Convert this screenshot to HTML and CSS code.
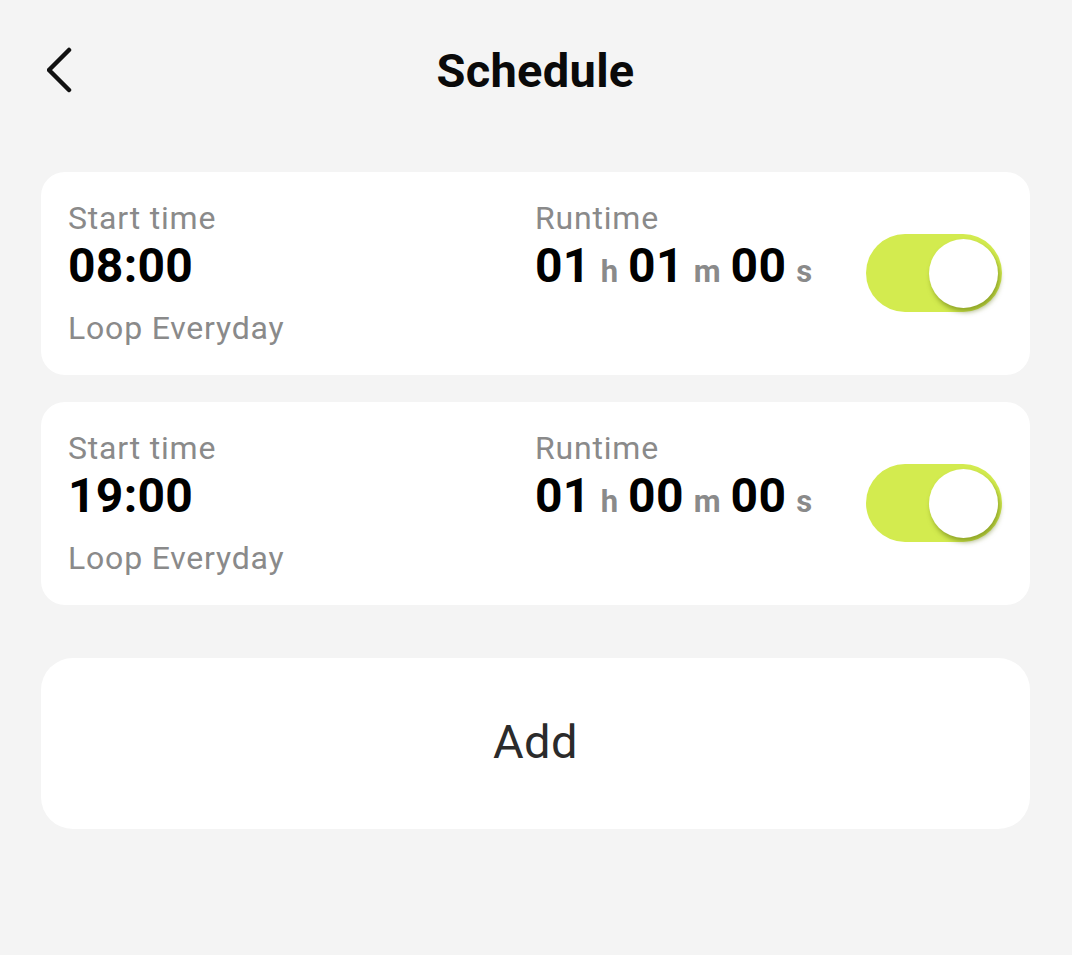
FILE: index.html
```html
<!DOCTYPE html>
<html lang="en">
<head>
  <meta charset="UTF-8">
  <meta name="viewport" content="width=device-width, initial-scale=1.0">
  <title>Schedule</title>
  <link rel="stylesheet" href="styles.css">
</head>
<body>
  <div class="page">
    <!-- Header -->
    <div class="header">
      <button class="back-btn" aria-label="Back">
        <svg width="30" height="50" viewBox="0 0 30 50">
          <path d="M22 5 L2 25 L22 45" fill="none" stroke="#111" stroke-width="4.5" stroke-linecap="round" stroke-linejoin="round"/>
        </svg>
      </button>
      <h1>Schedule</h1>
    </div>

    <!-- Schedule List -->
    <div class="schedule-list">
      <div class="schedule-card">
        <div class="col start-col">
          <div class="label">Start time</div>
          <div class="time">08:00</div>
          <div class="loop">Loop Everyday</div>
        </div>
        <div class="col runtime-col">
          <div class="label">Runtime</div>
          <div class="time">01<span class="unit">h</span>01<span class="unit">m</span>00<span class="unit">s</span></div>
        </div>
        <div class="toggle on"><span class="knob"></span></div>
      </div>

      <div class="schedule-card">
        <div class="col start-col">
          <div class="label">Start time</div>
          <div class="time">19:00</div>
          <div class="loop">Loop Everyday</div>
        </div>
        <div class="col runtime-col">
          <div class="label">Runtime</div>
          <div class="time">01<span class="unit">h</span>00<span class="unit">m</span>00<span class="unit">s</span></div>
        </div>
        <div class="toggle on"><span class="knob"></span></div>
      </div>
    </div>

    <!-- Add Button -->
    <button class="add-btn">Add</button>
  </div>
</body>
</html>
```

FILE: styles.css
```css
/* Reset and Base Styles */
* {
  margin: 0;
  padding: 0;
  box-sizing: border-box;
}

body {
  background-color: #f4f4f4;
  font-family: Roboto, "Liberation Sans", Arial, sans-serif;
  color: #000;
  height: 100vh;
  overflow: hidden;
}

.page {
  padding: 0 42px 0 41px;
}

/* Header */
.header {
  height: 140px;
  display: flex;
  align-items: center;
  justify-content: center;
  position: relative;
}

.header h1 {
  font-size: 47px;
  font-weight: bold;
  color: #0a0a0a;
  letter-spacing: 0.3px;
}

.back-btn {
  position: absolute;
  left: 6px;
  top: 45px;
  background: transparent;
  border: none;
  cursor: pointer;
  display: flex;
}

/* Schedule Cards */
.schedule-list {
  margin-top: 32px;
  display: flex;
  flex-direction: column;
  gap: 27px;
}

.schedule-card {
  background: #ffffff;
  border-radius: 24px;
  padding: 28px 28px 29px 27px;
  display: flex;
  align-items: center;
}

.col {
  align-self: flex-start;
}

.start-col {
  width: 467px;
}

.label {
  font-size: 32px;
  line-height: 36px;
  letter-spacing: 0.8px;
  color: #8a8a8a;
}

.time {
  font-size: 48px;
  line-height: 56px;
  font-weight: bold;
  letter-spacing: 0.3px;
  margin-top: 2px;
}

.time .unit {
  font-size: 31px;
  color: #8a8a8a;
  letter-spacing: 0;
  margin: 0 10px 0 10px;
}

.loop {
  font-size: 32px;
  line-height: 36px;
  letter-spacing: 0.8px;
  color: #8a8a8a;
  margin-top: 16px;
}

/* Toggle */
.toggle {
  margin-left: auto;
  width: 136px;
  height: 78px;
  border-radius: 39px;
  background: #d3eb4f;
  position: relative;
  cursor: pointer;
}

.toggle .knob {
  position: absolute;
  top: 5px;
  right: 4px;
  width: 69px;
  height: 69px;
  border-radius: 50%;
  background: #ffffff;
  box-shadow: 2px 4px 5px rgba(90, 110, 10, 0.55);
}

/* Add Button */
.add-btn {
  margin-top: 53px;
  width: 100%;
  height: 171px;
  padding-bottom: 4px;
  background: #ffffff;
  border: none;
  border-radius: 32px;
  font-family: Roboto, "Liberation Sans", Arial, sans-serif;
  font-size: 47px;
  letter-spacing: 0.5px;
  color: #2b2b2b;
  cursor: pointer;
}
```
